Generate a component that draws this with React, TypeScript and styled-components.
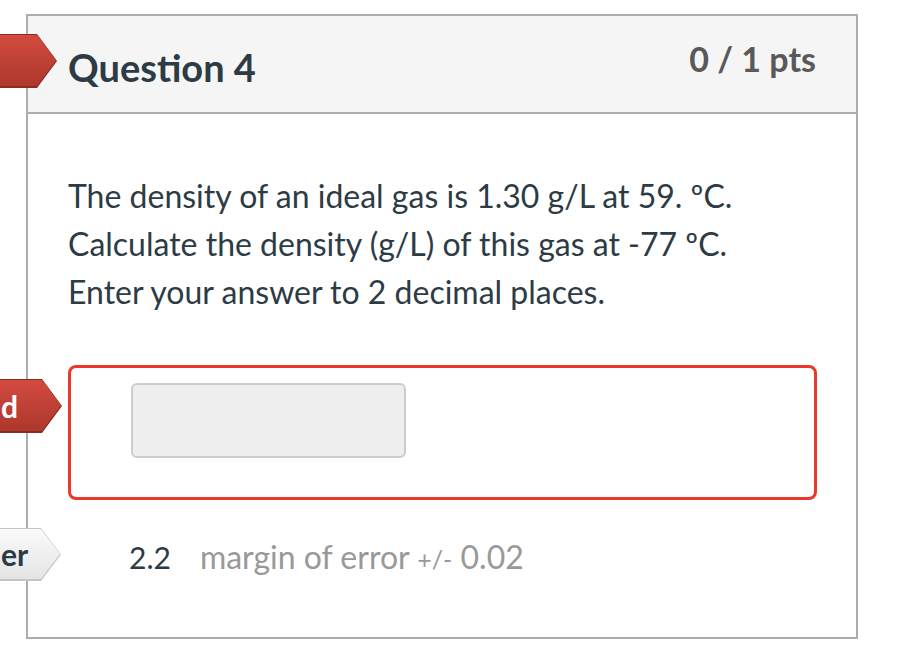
import React from 'react';
import styled, { createGlobalStyle } from 'styled-components';

const GlobalStyle = createGlobalStyle`
  html, body {
    margin: 0;
    padding: 0;
    background: #ffffff;
  }
  body {
    font-family: Lato, "Noto Sans", "Liberation Sans", sans-serif;
    color: #2d3b45;
  }
`;

const Page = styled.div`
  position: relative;
  width: 902px;
  height: 646px;
  padding: 14px 44px 0 26px;
  box-sizing: border-box;
  overflow: hidden;
`;

const Card = styled.div`
  border: 2px solid #adadad;
  background: #ffffff;
`;

const Header = styled.div`
  display: flex;
  justify-content: space-between;
  align-items: flex-start;
  height: 98px;
  box-sizing: border-box;
  padding: 23px 40px 0 40px;
  background: #f5f5f5;
  border-bottom: 2px solid #adadad;
`;

const Title = styled.h2`
  margin: 6px 0 0;
  font-size: 38px;
  font-weight: 700;
  line-height: 1.2;
  color: #2d3b45;
`;

const Points = styled.div`
  font-size: 34px;
  font-weight: 700;
  line-height: 1.2;
  color: #595959;
`;

const Body = styled.div`
  display: flex;
  flex-direction: column;
  padding: 58px 39px 55px 40px;
`;

const QuestionText = styled.p`
  margin: 0;
  font-size: 32px;
  line-height: 48px;
  color: #2d3b45;
`;

const AnswerBox = styled.div`
  margin-top: 49px;
  border: 3px solid #e8392a;
  border-radius: 8px;
  padding: 15px 0 39px 60px;
`;

const AnswerInput = styled.input`
  display: block;
  width: 275px;
  height: 75px;
  box-sizing: border-box;
  background: #eeeeee;
  border: 2px solid #cdcdcd;
  border-radius: 6px;
  outline: none;
  font: inherit;
`;

const CorrectRow = styled.div`
  display: flex;
  align-items: baseline;
  margin-top: 34px;
  padding-left: 61px;
  font-size: 30px;
  line-height: 46px;
  white-space: nowrap;
`;

const CorrectValue = styled.span`
  color: #2d3b45;
  margin-right: 29px;
`;

const Margin = styled.span<{ $small?: boolean }>`
  color: #999999;
  font-size: ${p => (p.$small ? '25px' : '32px')};
  white-space: pre;
`;

const Tag = styled.div<{ $top: number; $height: number; $tip: number; $tone: 'red' | 'gray' }>`
  position: absolute;
  left: 0;
  top: ${p => p.$top}px;
  width: ${p => p.$tip}px;
  height: ${p => p.$height}px;
  clip-path: polygon(0 0, calc(100% - 20px) 0, 100% 50%, calc(100% - 20px) 100%, 0 100%);
  background: ${p => (p.$tone === 'red' ? '#8e2a20' : '#c4c4c4')};
`;

const TagFace = styled.div<{ $tone: 'red' | 'gray' }>`
  position: absolute;
  inset: 1px 1px 2px 0;
  display: flex;
  align-items: center;
  padding-left: 1px;
  clip-path: polygon(0 0, calc(100% - 19px) 0, 100% 50%, calc(100% - 19px) 100%, 0 100%);
  background: ${p =>
    p.$tone === 'red'
      ? 'linear-gradient(#d24a3f, #ad382d)'
      : 'linear-gradient(#fbfbfb, #e4e4e4)'};
  color: ${p => (p.$tone === 'red' ? '#ffffff' : '#2d3b45')};
  font-size: 30px;
  font-weight: 700;
  white-space: nowrap;
`;

const App: React.FC = () => {
  return (
    <>
      <GlobalStyle />
      <Page>
        <Card>
          <Header>
            <Title>Question 4</Title>
            <Points>0 / 1 pts</Points>
          </Header>
          <Body>
            <QuestionText>
              The density of an ideal gas is 1.30 g/L at 59. ºC.
              <br />
              Calculate the density (g/L) of this gas at -77 ºC.
              <br />
              Enter your answer to 2 decimal places.
            </QuestionText>
            <AnswerBox>
              <AnswerInput type="text" readOnly aria-label="Your answer" />
            </AnswerBox>
            <CorrectRow>
              <CorrectValue>2.2</CorrectValue>
              <Margin>margin of error </Margin>
              <Margin $small>+/-</Margin>
              <Margin> 0.02</Margin>
            </CorrectRow>
          </Body>
        </Card>

        <Tag $top={34} $height={54} $tip={57} $tone="red">
          <TagFace $tone="red" />
        </Tag>
        <Tag $top={379} $height={54} $tip={62} $tone="red">
          <TagFace $tone="red">d</TagFace>
        </Tag>
        <Tag $top={528} $height={53} $tip={61} $tone="gray">
          <TagFace $tone="gray">er</TagFace>
        </Tag>
      </Page>
    </>
  );
};

export default App;
